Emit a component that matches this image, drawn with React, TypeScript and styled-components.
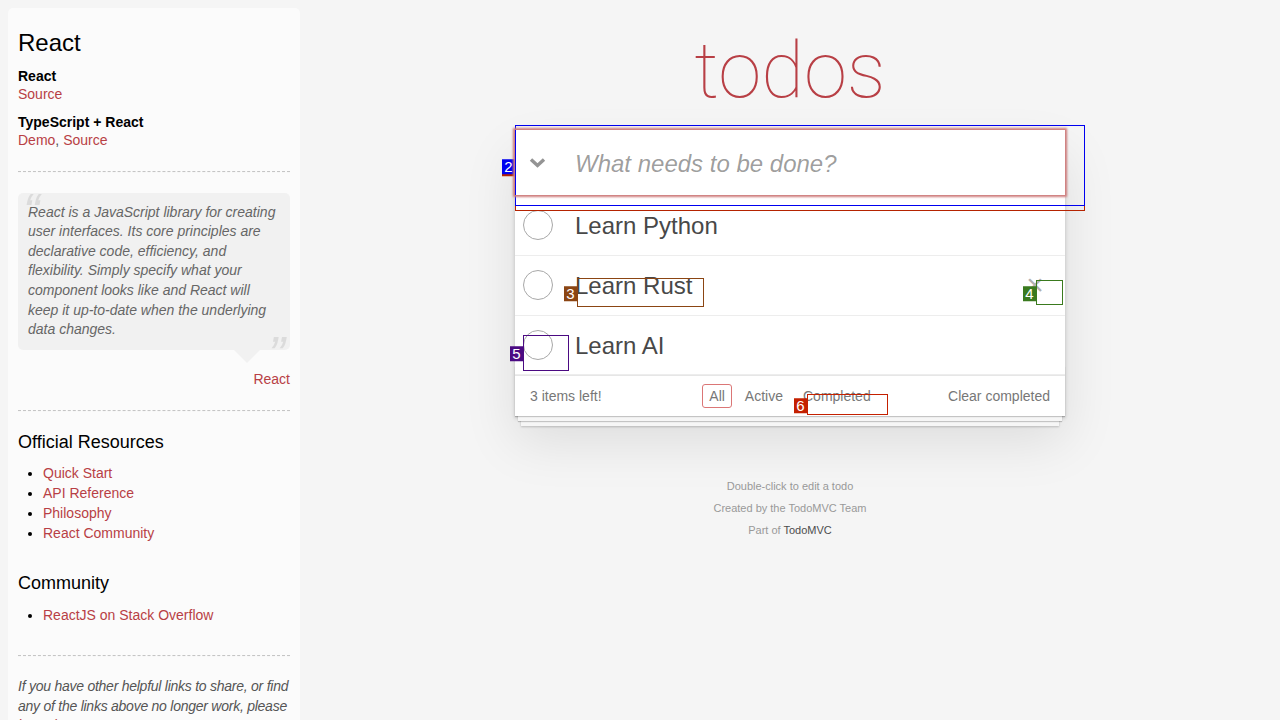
import React from 'react';
import styled, { createGlobalStyle } from 'styled-components';

const GlobalStyle = createGlobalStyle`
  html, body {
    margin: 0;
    padding: 0;
    overflow: hidden;
  }
  body {
    background: #f5f5f5;
    color: #111;
    font: 14px 'Liberation Sans', Arial, sans-serif;
    line-height: 1.4em;
    -webkit-font-smoothing: antialiased;
  }
`;

const Page = styled.div`
  display: flex;
  align-items: flex-start;
  height: 720px;
  overflow: hidden;
  position: relative;
`;

/* ---------- learn sidebar ---------- */

const Sidebar = styled.aside`
  flex: 0 0 272px;
  margin: 8px 0 0 8px;
  padding: 10px;
  min-height: 800px;
  background: rgba(255, 255, 255, 0.6);
  border-radius: 5px 5px 0 0;
  color: #4d4d4d;
`;

const SideTitle = styled.h3`
  margin: 11px 0 10px;
  font-size: 24px;
  font-weight: 500;
  line-height: 1.2;
  color: #000;
`;

const ExampleName = styled.h5`
  margin: 10px 0 0;
  font-size: 14px;
  font-weight: 700;
  line-height: 1.2;
  color: #000;
`;

const ExampleLinks = styled.div`
  margin: 0;
`;

const SideLink = styled.a`
  color: #b83f45;
  text-decoration: none;
`;

const Rule = styled.hr`
  margin: 20px 0;
  border: 0;
  border-top: 1px dashed #c5c5c5;
  border-bottom: 1px dashed #f7f7f7;
`;

const Quote = styled.blockquote`
  position: relative;
  margin: 20px 0 60px;
  padding: 10px;
  background: rgba(0, 0, 0, 0.04);
  border-radius: 5px;

  &::after {
    content: '';
    position: absolute;
    top: 100%;
    right: 30px;
    border: 13px solid transparent;
    border-top-color: rgba(0, 0, 0, 0.04);
  }
`;

const QuoteText = styled.p`
  margin: 0;
  font-style: italic;
  color: #666;

  &::before,
  &::after {
    position: absolute;
    font-size: 50px;
    line-height: 1;
    opacity: 0.15;
  }
  &::before {
    content: '“';
    top: -6px;
    left: 5px;
  }
  &::after {
    content: '”';
    bottom: -30px;
    right: 5px;
  }
`;

const QuoteFooter = styled.footer`
  position: absolute;
  bottom: -40px;
  right: 0;
`;

const SectionTitle = styled.h4`
  margin: 10px 0;
  font-size: 18px;
  font-weight: 500;
  line-height: 1.2;
  color: #000;
`;

const LinkList = styled.ul`
  margin: 0 0 30px 25px;
  padding: 0;
  color: #000;

  li {
    line-height: 20px;
  }
`;

const Note = styled.em`
  display: block;
  color: #555;
  letter-spacing: -0.25px;
`;

/* ---------- todo app ---------- */

const Main = styled.main`
  flex: 1;
  display: flex;
  flex-direction: column;
  align-items: center;
`;

const Title = styled.h1`
  margin: 0;
  padding: 32px 0 20px;
  font-family: Roboto, 'Liberation Sans', sans-serif;
  font-size: 78px;
  font-weight: 100;
  line-height: 78px;
  color: #b83f45;
  text-align: center;
`;

const TodoApp = styled.section`
  position: relative;
  width: 550px;
  background: #fff;
  box-shadow: 0 2px 4px 0 rgba(0, 0, 0, 0.2), 0 25px 50px 0 rgba(0, 0, 0, 0.1);
`;

const Header = styled.header`
  display: flex;
  align-items: center;
  height: 65px;
  box-shadow: 0 0 2px 2px #cf7d7d;
  position: relative;
  z-index: 1;
`;

const ToggleAll = styled.label`
  display: flex;
  align-items: center;
  justify-content: center;
  width: 45px;
  height: 100%;
  padding-right: 15px;
  color: #949494;
`;

const NewTodo = styled.input`
  flex: 1;
  min-width: 0;
  height: 100%;
  box-sizing: border-box;
  padding: 17px 16px 15px 0;
  border: none;
  outline: none;
  background: transparent;
  font: inherit;
  font-size: 24px;
  line-height: 1.4em;
  color: #484848;

  &::placeholder {
    font-style: italic;
    color: rgba(0, 0, 0, 0.4);
  }
`;

const TodoList = styled.ul`
  margin: 0;
  padding: 0;
  list-style: none;
  border-top: 1px solid #e6e6e6;
`;

const TodoItem = styled.li`
  display: flex;
  align-items: center;
  border-bottom: 1px solid #ededed;
  font-size: 24px;
`;

const Toggle = styled.span`
  flex: 0 0 auto;
  width: 30px;
  height: 30px;
  margin: 0 22px 0 8px;
  box-sizing: border-box;
  border: 1px solid #a8a8a8;
  border-radius: 50%;
`;

const TodoLabel = styled.label`
  flex: 1;
  padding: 16px 0 14px;
  line-height: 1.2;
  color: #484848;
`;

const Destroy = styled.button<{ $shown: boolean }>`
  width: 40px;
  height: 40px;
  margin-right: 10px;
  padding: 0;
  border: 0;
  background: none;
  font: inherit;
  font-size: 30px;
  line-height: 40px;
  color: #b0b0b0;
  visibility: ${(p) => (p.$shown ? 'visible' : 'hidden')};
`;

const Footer = styled.footer`
  position: relative;
  display: grid;
  grid-template-columns: 1fr auto 1fr;
  align-items: center;
  height: 20px;
  padding: 10px 15px;
  border-top: 1px solid #e6e6e6;
  font-size: 14px;
  line-height: 20px;
  color: #777;

  &::before {
    content: '';
    position: absolute;
    right: 0;
    bottom: 0;
    left: 0;
    height: 50px;
    overflow: hidden;
    pointer-events: none;
    box-shadow: 0 1px 1px rgba(0, 0, 0, 0.2), 0 8px 0 -3px #f6f6f6,
      0 9px 1px -3px rgba(0, 0, 0, 0.2), 0 16px 0 -6px #f6f6f6,
      0 17px 2px -6px rgba(0, 0, 0, 0.2);
  }
`;

const Count = styled.span`
  justify-self: start;
`;

const Filters = styled.ul`
  margin: 0;
  padding: 0;
  list-style: none;
  white-space: nowrap;
`;

const Filter = styled.li`
  display: inline;
`;

const FilterLink = styled.a<{ $selected?: boolean }>`
  margin: 3px;
  padding: 3px 6px;
  border: 1px solid ${(p) => (p.$selected ? '#db7676' : 'transparent')};
  border-radius: 3px;
  color: inherit;
  text-decoration: none;
`;

const ClearCompleted = styled.button`
  justify-self: end;
  padding: 0;
  border: 0;
  background: none;
  font: inherit;
  color: inherit;
`;

const Info = styled.footer`
  margin-top: 65px;
  font-size: 11px;
  color: #999;
  text-align: center;

  p {
    margin: 0 0 11px;
    line-height: 1;
  }
  a {
    color: #4d4d4d;
    text-decoration: none;
  }
`;

/* ---------- annotation marks ---------- */

const Mark = styled.div<{ $x: number; $y: number; $w: number; $h: number; $c: string }>`
  position: absolute;
  left: ${(p) => p.$x}px;
  top: ${(p) => p.$y}px;
  width: ${(p) => p.$w}px;
  height: ${(p) => p.$h}px;
  box-sizing: border-box;
  border: 1px solid ${(p) => p.$c};
  pointer-events: none;
`;

const MarkLabel = styled.span<{ $c: string }>`
  position: absolute;
  right: calc(100% + 1px);
  top: 50%;
  transform: translateY(-45%);
  min-width: 9px;
  padding: 0 2px;
  background: ${(p) => p.$c};
  color: #fff;
  font: 15px/15px 'Liberation Sans', Arial, sans-serif;
  text-align: center;
`;

const marks = [
  { n: '2', c: '#b52300', x: 515, y: 125, w: 570, h: 86 },
  { n: '2', c: '#0000f0', x: 515, y: 125, w: 570, h: 81 },
  { n: '3', c: '#8b4513', x: 577, y: 278, w: 127, h: 29 },
  { n: '4', c: '#3a7a1e', x: 1036, y: 280, w: 27, h: 25 },
  { n: '5', c: '#4b0a82', x: 523, y: 335, w: 46, h: 36 },
  { n: '6', c: '#c42000', x: 807, y: 394, w: 81, h: 21 },
];

const todos = ['Learn Python', 'Learn Rust', 'Learn AI'];

function ChevronDown() {
  return (
    <svg width="17" height="11" viewBox="0 0 17 11">
      <path d="M2 2.5 L8.5 8.5 L15 2.5" fill="none" stroke="currentColor" strokeWidth="3.4" />
    </svg>
  );
}

export default function App() {
  return (
    <>
      <GlobalStyle />
      <Page>
        <Sidebar>
          <header>
            <SideTitle>React</SideTitle>
            <ExampleName>React</ExampleName>
            <ExampleLinks>
              <SideLink href="#">Source</SideLink>
            </ExampleLinks>
            <ExampleName>TypeScript + React</ExampleName>
            <ExampleLinks>
              <SideLink href="#">Demo</SideLink>, <SideLink href="#">Source</SideLink>
            </ExampleLinks>
          </header>
          <Rule />
          <Quote>
            <QuoteText>
              React is a JavaScript library for creating user interfaces. Its core principles are
              declarative code, efficiency, and flexibility. Simply specify what your component
              looks like and React will keep it up-to-date when the underlying data changes.
            </QuoteText>
            <QuoteFooter>
              <SideLink href="#">React</SideLink>
            </QuoteFooter>
          </Quote>
          <Rule />
          <SectionTitle>Official Resources</SectionTitle>
          <LinkList>
            <li><SideLink href="#">Quick Start</SideLink></li>
            <li><SideLink href="#">API Reference</SideLink></li>
            <li><SideLink href="#">Philosophy</SideLink></li>
            <li><SideLink href="#">React Community</SideLink></li>
          </LinkList>
          <SectionTitle>Community</SectionTitle>
          <LinkList>
            <li><SideLink href="#">ReactJS on Stack Overflow</SideLink></li>
          </LinkList>
          <Rule />
          <Note>
            If you have other helpful links to share, or find any of the links above no longer
            work, please <SideLink href="#">let us know</SideLink>.
          </Note>
        </Sidebar>

        <Main>
          <Title>todos</Title>
          <TodoApp>
            <Header>
              <ToggleAll>
                <ChevronDown />
              </ToggleAll>
              <NewTodo placeholder="What needs to be done?" />
            </Header>
            <TodoList>
              {todos.map((todo) => (
                <TodoItem key={todo}>
                  <Toggle />
                  <TodoLabel>{todo}</TodoLabel>
                  <Destroy $shown={todo === 'Learn Rust'}>×</Destroy>
                </TodoItem>
              ))}
            </TodoList>
            <Footer>
              <Count>3 items left!</Count>
              <Filters>
                <Filter><FilterLink href="#" $selected>All</FilterLink></Filter>
                <Filter><FilterLink href="#">Active</FilterLink></Filter>
                <Filter><FilterLink href="#">Completed</FilterLink></Filter>
              </Filters>
              <ClearCompleted>Clear completed</ClearCompleted>
            </Footer>
          </TodoApp>
          <Info>
            <p>Double-click to edit a todo</p>
            <p>Created by the TodoMVC Team</p>
            <p>
              Part of <a href="#">TodoMVC</a>
            </p>
          </Info>
        </Main>

        {marks.map((m, i) => (
          <Mark key={i} $x={m.x} $y={m.y} $w={m.w} $h={m.h} $c={m.c}>
            <MarkLabel $c={m.c}>{m.n}</MarkLabel>
          </Mark>
        ))}
      </Page>
    </>
  );
}
